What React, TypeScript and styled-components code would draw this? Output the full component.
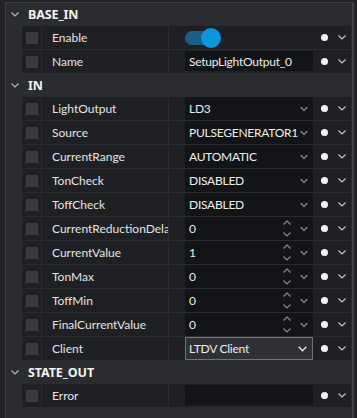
import React from 'react';
import styled, { createGlobalStyle } from 'styled-components';

const Global = createGlobalStyle`
  html, body { margin: 0; padding: 0; background: #232428; }
  body { width: 357px; height: 418px; overflow: hidden; font-family: Lato, "Noto Sans", sans-serif; }
`;

const Frame = styled.div`
  width: 357px;
  height: 418px;
  box-sizing: border-box;
  padding: 2px 3px 0 5px;
  background: #232428;
  display: flex;
`;

const Panel = styled.div`
  flex: 1;
  box-sizing: border-box;
  border-left: 1px solid #3d3e43;
  border-top: 1px solid #3d3e43;
  border-right: 2px solid #404146;
  background: #2b2c30;
  display: flex;
  flex-direction: column;
`;

const Header = styled.div`
  height: 23px;
  display: flex;
  align-items: center;
  padding-left: 5px;
  gap: 9px;
  color: #f2f2f2;
  font-family: "Noto Sans", sans-serif;
  font-weight: 700;
  font-size: 12.5px;
  letter-spacing: -0.1px;
`;

const Row = styled.div`
  height: 23px;
  margin: 0 1px 1px 16px;
  display: grid;
  grid-template-columns: 19px 126px 182px;
  column-gap: 1px;
`;

const CheckCell = styled.div`
  background: #1f2024;
  display: flex;
  align-items: center;
  justify-content: center;
`;

const Check = styled.div`
  width: 12px;
  height: 12px;
  background: #3a3b3f;
`;

const LabelCell = styled.div`
  background: #1f2024;
  color: #e4e4e4;
  font-size: 12px;
  display: flex;
  align-items: center;
  padding-left: 10px;
  white-space: nowrap;
  overflow: hidden;
`;

const ValueCell = styled.div`
  background: #1f2024;
  display: flex;
  align-items: stretch;
  padding-left: 16px;
`;

const Field = styled.div<{ $kind?: 'select' | 'text' | 'client' | 'empty' }>`
  width: 128px;
  box-sizing: border-box;
  position: relative;
  display: flex;
  align-items: center;
  color: #ececec;
  font-size: 12px;
  letter-spacing: -0.25px;
  white-space: nowrap;
  overflow: hidden;
  background: ${p => (p.$kind === 'client' ? '#2f3136' : '#131417')};
  border: ${p => (p.$kind === 'client' ? '1px solid #707278' : 'none')};
  padding-left: ${p => (p.$kind === 'client' ? '3px' : '4px')};
  margin: ${p => (p.$kind === 'text' || p.$kind === 'empty' ? '1px 0 2px' : '0')};
`;

const ToggleWrap = styled.div`
  width: 128px;
  display: flex;
  align-items: center;
`;

const Track = styled.div`
  width: 31px;
  height: 14px;
  border-radius: 7px;
  background: #1b5f86;
  position: relative;
`;

const Knob = styled.div`
  position: absolute;
  left: 16px;
  top: -3px;
  width: 20px;
  height: 20px;
  border-radius: 50%;
  background: #0a97db;
`;

const Chev = styled.svg<{ $right: number }>`
  position: absolute;
  right: ${p => p.$right}px;
  top: 50%;
  transform: translateY(-50%);
`;

const Spinner = styled.div`
  position: absolute;
  right: 22px;
  top: 0;
  bottom: 0;
  display: flex;
  flex-direction: column;
  justify-content: center;
  gap: 7px;
`;

const Tail = styled.div`
  flex: 1;
  display: flex;
  align-items: center;
  padding-left: 8px;
  gap: 10px;
`;

const Dot = styled.div`
  width: 7px;
  height: 7px;
  border-radius: 50%;
  background: #f4f4f4;
`;

const Down = ({ color = '#8c8d90' }: { color?: string }) => (
  <svg width={8} height={5} viewBox="0 0 8 5">
    <path d="M0.5 0.5 L4 4 L7.5 0.5" fill="none" stroke={color} strokeWidth={1.2} />
  </svg>
);

const Up = ({ color = '#8c8d90' }: { color?: string }) => (
  <svg width={8} height={5} viewBox="0 0 8 5">
    <path d="M0.5 4.5 L4 1 L7.5 4.5" fill="none" stroke={color} strokeWidth={1.2} />
  </svg>
);

type Item = {
  label: string;
  kind: 'toggle' | 'text' | 'select' | 'number' | 'client' | 'empty';
  value?: string;
};

const sections: { title: string; items: Item[] }[] = [
  {
    title: 'BASE_IN',
    items: [
      { label: 'Enable', kind: 'toggle' },
      { label: 'Name', kind: 'text', value: 'SetupLightOutput_0' },
    ],
  },
  {
    title: 'IN',
    items: [
      { label: 'LightOutput', kind: 'select', value: 'LD3' },
      { label: 'Source', kind: 'select', value: 'PULSEGENERATOR1' },
      { label: 'CurrentRange', kind: 'select', value: 'AUTOMATIC' },
      { label: 'TonCheck', kind: 'select', value: 'DISABLED' },
      { label: 'ToffCheck', kind: 'select', value: 'DISABLED' },
      { label: 'CurrentReductionDelay', kind: 'number', value: '0' },
      { label: 'CurrentValue', kind: 'number', value: '1' },
      { label: 'TonMax', kind: 'number', value: '0' },
      { label: 'ToffMin', kind: 'number', value: '0' },
      { label: 'FinalCurrentValue', kind: 'number', value: '0' },
      { label: 'Client', kind: 'client', value: 'LTDV Client' },
    ],
  },
  {
    title: 'STATE_OUT',
    items: [{ label: 'Error', kind: 'empty' }],
  },
];

const SelectChevron = () => (
  <Chev $right={5} width={8} height={5} viewBox="0 0 8 5">
    <path d="M0.5 0.5 L4 4 L7.5 0.5" fill="none" stroke="#8c8d90" strokeWidth={1.2} />
  </Chev>
);

const ValueWidget = ({ item }: { item: Item }) => {
  switch (item.kind) {
    case 'toggle':
      return (
        <ToggleWrap>
          <Track>
            <Knob />
          </Track>
        </ToggleWrap>
      );
    case 'text':
      return <Field $kind="text">{item.value}</Field>;
    case 'empty':
      return <Field $kind="empty" />;
    case 'select':
      return (
        <Field $kind="select">
          {item.value}
          <SelectChevron />
        </Field>
      );
    case 'number':
      return (
        <Field $kind="select">
          {item.value}
          <Spinner>
            <Up />
            <Down />
          </Spinner>
          <SelectChevron />
        </Field>
      );
    case 'client':
      return (
        <Field $kind="client">
          {item.value}
          <Chev $right={5} width={9} height={6} viewBox="0 0 9 6">
            <path d="M0.7 0.7 L4.5 4.7 L8.3 0.7" fill="none" stroke="#e6e6e6" strokeWidth={1.4} />
          </Chev>
        </Field>
      );
  }
};

export default function App() {
  return (
    <>
      <Global />
      <Frame>
        <Panel>
          {sections.map(sec => (
            <React.Fragment key={sec.title}>
              <Header>
                <Down color="#b4b5b8" />
                {sec.title}
              </Header>
              {sec.items.map(item => (
                <Row key={item.label}>
                  <CheckCell>
                    <Check />
                  </CheckCell>
                  <LabelCell>{item.label}</LabelCell>
                  <ValueCell>
                    <ValueWidget item={item} />
                    <Tail>
                      <Dot />
                      <Down color="#c4c5c8" />
                    </Tail>
                  </ValueCell>
                </Row>
              ))}
            </React.Fragment>
          ))}
        </Panel>
      </Frame>
    </>
  );
}
